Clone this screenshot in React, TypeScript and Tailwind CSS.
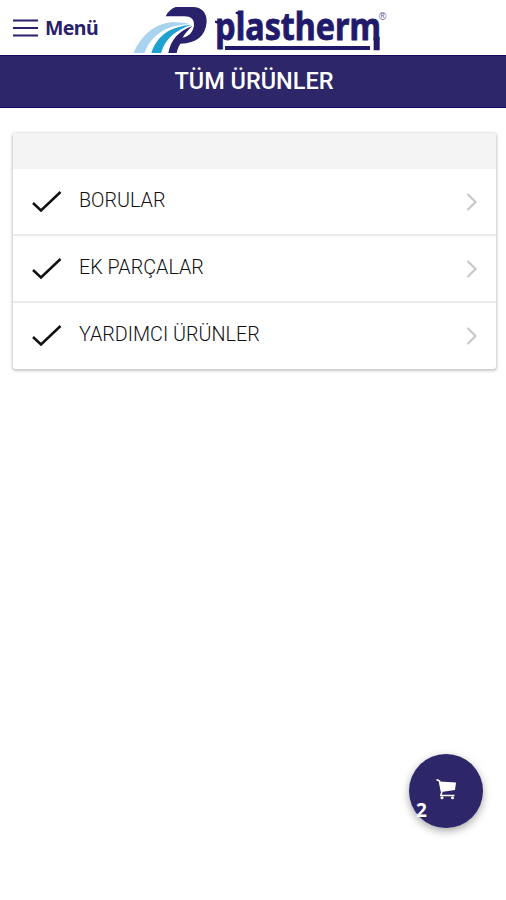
import React from 'react';

type Category = {
  id: number;
  name: string;
};

const categories: Category[] = [
  { id: 1, name: 'BORULAR' },
  { id: 2, name: 'EK PARÇALAR' },
  { id: 3, name: 'YARDIMCI ÜRÜNLER' },
];

const Logo: React.FC = () => (
  <svg width="270" height="54" viewBox="0 0 810 162" className="block overflow-visible">
    {/* pipes */}
    <path d="M26 159 C52 98 98 66 152 67 C170 67 184 69 196 73 C134 74 84 96 58 159 Z" fill="#a9d3ee" />
    <path d="M79 159 C96 108 132 80 200 74 C154 90 122 112 108 159 Z" fill="#1fa2cf" />
    <path
      d="M152 21 H202 C232 21 246 40 245 66 C242 106 216 130 166 131 C160 140 157 149 155 159 H130 C137 122 158 94 202 78 C188 91 178 103 173 113 C194 109 205 94 207 76 C208 58 198 49 178 49 H122 C128 36 138 26 152 21 Z"
      fill="#29216b"
    />
    <text
      x="271"
      y="121"
      textLength="497"
      lengthAdjust="spacingAndGlyphs"
      fontSize="112"
      fill="#211a6b"
      stroke="#211a6b"
      strokeWidth="2.5"
      className="font-['Noto_Sans',sans-serif] font-bold"
    >
      plastherm
    </text>
    {/* flags on the stems, tail of the m and the underline */}
    <path d="M270 62 H290 V76 L270 68 Z M332 35 H350 V48 L332 41 Z M746 110 H764 V151 H746 Z M300 138 H735 V150 H300 Z" fill="#211a6b" />
    <text x="761" y="60" fontSize="31" fill="#5f5a91" className="font-['Liberation_Sans',sans-serif]">
      ®
    </text>
  </svg>
);

const CategoryRow: React.FC<{ category: Category }> = ({ category }) => (
  <li className="flex h-[67px] items-center border-b-2 border-[#ebebeb] pl-[19px] pr-[18px] last:h-[66px] last:border-b-0">
    <svg width="30" height="24" viewBox="0 0 30 24" fill="none" className="shrink-0">
      <path d="M1 13 L9 20.5 L28.5 2" stroke="#111" strokeWidth="2.5" />
    </svg>
    <span className="ml-[17px] flex-1 pb-[2px] text-[19.75px] font-light text-[#111]">{category.name}</span>
    <svg width="12" height="18" viewBox="0 0 12 18" fill="none">
      <path d="M1.5 1 L9.5 9 L1.5 17" stroke="#c8c8c8" strokeWidth="2.2" />
    </svg>
  </li>
);

const App: React.FC = () => {
  return (
    <div className="relative h-[900px] w-[506px] overflow-hidden bg-white font-['Roboto',sans-serif]">
      <header className="flex h-[55px]">
        <button className="flex w-[125px] items-center pl-[13px] text-[#29216b]">
          <svg width="25" height="18" viewBox="0 0 25 18" className="shrink-0">
            <path d="M0 1.5 H25 M0 9 H25 M0 16.5 H25" stroke="#29216b" strokeWidth="2" />
          </svg>
          <span className="ml-[7px] font-['Noto_Sans',sans-serif] text-[19.5px] font-bold tracking-[-0.6px]">Menü</span>
        </button>
        <Logo />
      </header>

      <div className="flex h-[53px] items-center justify-center border-y border-[#15075a] bg-[#2d2669] pl-[2px]">
        <h1 className="text-[23.5px] font-medium text-white">TÜM ÜRÜNLER</h1>
      </div>

      <main className="pl-[13px] pr-[10px] pt-[25px]">
        <section className="overflow-hidden rounded-[3px] bg-white shadow-[0_1px_3px_1px_rgba(0,0,0,0.22)]">
          <div className="h-[36px] bg-[#f4f4f4]" />
          <ul>
            {categories.map((c) => (
              <CategoryRow key={c.id} category={c} />
            ))}
          </ul>
        </section>
      </main>

      {/* floating cart */}
      <button className="absolute left-[409px] top-[754px] flex size-[74px] items-center justify-center rounded-full bg-[#2d2669] shadow-[0_3px_8px_rgba(0,0,0,0.35)]">
        <svg width="21" height="21" viewBox="0 0 21 21" className="mb-1">
          <path d="M0.5 0.5 L3.5 2 L5.5 12.5" stroke="#fff" strokeWidth="1.6" fill="none" />
          <path d="M3 2.5 L20 3.5 L19 11 L5.5 13 Z" fill="#fff" />
          <path d="M6 12.5 L4.8 16.5 H18.5" stroke="#fff" strokeWidth="1.5" fill="none" />
          <circle cx="6" cy="18.7" r="1.5" fill="#fff" />
          <circle cx="16.5" cy="18.7" r="1.5" fill="#fff" />
        </svg>
        <span className="absolute left-[7px] top-[44px] font-['Noto_Sans',sans-serif] text-[19px] font-bold leading-6 text-white">
          2
        </span>
      </button>
    </div>
  );
};

export default App;
